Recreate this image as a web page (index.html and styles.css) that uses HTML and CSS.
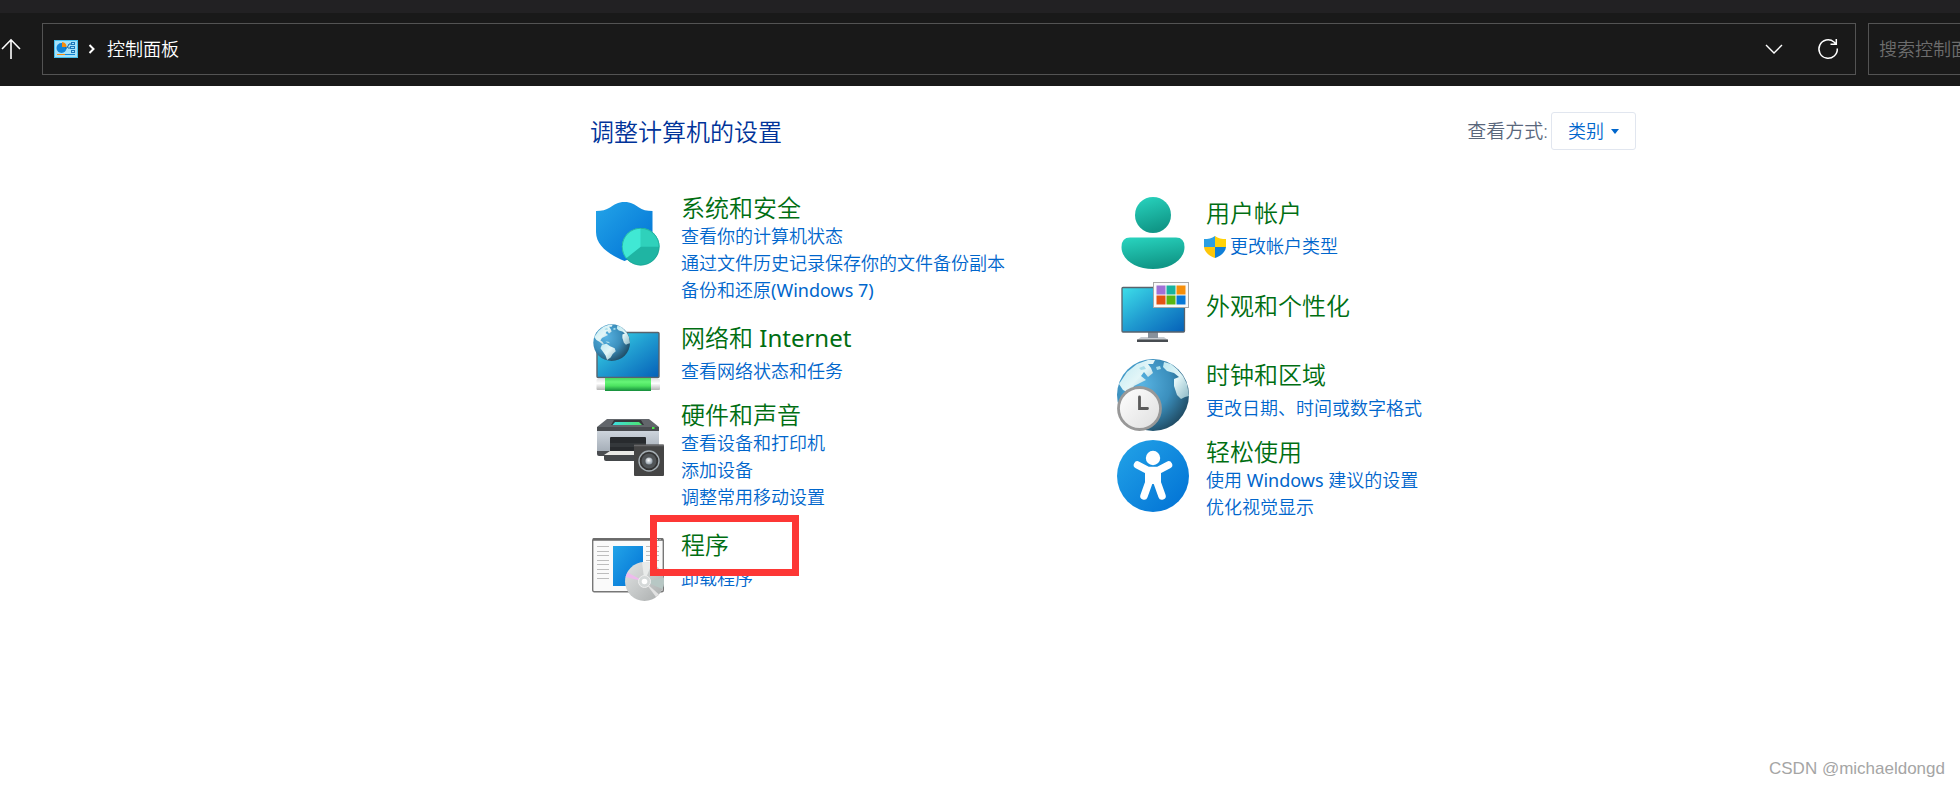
FILE: index.html
```html
<!DOCTYPE html>
<html lang="zh-CN">
<head>
  <meta charset="UTF-8">
  <title>控制面板</title>
  <meta name="viewport" content="width=device-width, initial-scale=1.0">
  <link rel="stylesheet" href="styles.css">
</head>
<body>

  <header class="toolbar">
    <button class="up" type="button" aria-label="up">
      <svg width="22" height="22" viewBox="0 0 22 22" fill="none" stroke="#fff" stroke-width="1.6"><path d="M11 21V2M2 11l9-9.2L20 11"/></svg>
    </button>
    <nav class="address">
      <svg width="24" height="18" viewBox="0 0 24 18">
        <rect width="24" height="18" fill="#46c0ee"/>
        <rect x="1" y="1" width="22" height="16" fill="#a5e2fa"/>
        <circle cx="7.500" cy="8" r="5" fill="#1184d8"/>
        <path d="M8 7V2a5 5 0 0 1 4.500 5z" fill="#f78d0c"/>
        <path d="M11 8h2l2-4h3M14 8h2" fill="none" stroke="#155f9c"/>
        <g fill="none" stroke="#1b78bd"><rect x="17.500" y="2.500" width="3" height="2"/><rect x="16.500" y="6.500" width="4" height="2"/><rect x="17.500" y="10.500" width="3" height="2"/></g>
        <path d="M3 14.500h8" stroke="#f78d0c"/><path d="M11 14.500h10" stroke="#1184d8"/>
      </svg>
      <svg width="8" height="10" viewBox="0 0 8 10" fill="none" stroke="#fff" stroke-width="2"><path d="M1.500 1l4 4-4 4"/></svg>
      <a href="#">控制面板</a>
      <button class="history" type="button" aria-label="history">
        <svg width="18" height="12" viewBox="0 0 18 12" fill="none" stroke="#fff" stroke-width="1.400"><path d="M1 2l8 8 8-8"/></svg>
      </button>
      <button class="refresh" type="button" aria-label="refresh">
        <svg width="22" height="22" viewBox="0 0 22 22" fill="none" stroke="#fff" stroke-width="1.500"><path d="M20.300 10.500A9.200 9.200 0 1 1 17 4l2 2M19.300 1v5.300H13.500"/></svg>
      </button>
    </nav>
    <input class="search" type="text" placeholder="搜索控制面板" aria-label="search">
  </header>

  <main>
    <div class="head">
      <h1>调整计算机的设置</h1>
      <div class="view">
        <label for="viewBy">查看方式:</label>
        <div class="picker">
          <select id="viewBy">
            <option>类别</option>
          </select>
          <svg width="8" height="5" viewBox="0 0 8 5"><path d="M0 0h8L4 5z" fill="#0066cc"/></svg>
        </div>
      </div>
    </div>

    <div class="columns">
      <div class="column">

        <section class="item triple">
          <svg class="icon" viewBox="0 0 72 72">
            <defs>
              <linearGradient id="blue" x1="0" y1="0" x2="1" y2="1"><stop offset="0" stop-color="#23a4e8"/><stop offset="1" stop-color="#0070d4"/></linearGradient>
            </defs>
            <path d="M32.500 4C39 4 43 6.500 47 9.500C50 12 55 13 60.500 13V34C60.500 48 46 58 32.500 63C18 57 4 48 4 34V13C10 13 14 12 18 9.500C22 6.500 26 4 32.500 4z" fill="url(#blue)"/>
            <circle cx="48.700" cy="48.700" r="18.800" fill="#1fb5a3"/>
            <path d="M48.700 48.700V29.900A18.800 18.800 0 0 1 67.500 48.700z" fill="#2fd1bb"/>
            <path d="M48.700 48.700V29.900A18.800 18.800 0 0 0 34 60.400z" fill="#40e8d4"/>
            <circle cx="48.700" cy="48.700" r="18.400" fill="none" stroke="#199e91" stroke-opacity=".6"/>
          </svg>
          <div class="text">
            <h2><a href="#">系统和安全</a></h2>
            <a href="#">查看你的计算机状态</a>
            <a href="#">通过文件历史记录保存你的文件备份副本</a>
            <a href="#">备份和还原<span class="latin">(Windows 7)</span></a>
          </div>
        </section>

        <section class="item">
          <svg class="icon" viewBox="0 0 72 72">
            <defs>
              <linearGradient id="screen" x1="0" y1="0" x2="1" y2="1"><stop offset="0" stop-color="#3ddfea"/><stop offset=".5" stop-color="#209bd0"/><stop offset="1" stop-color="#0560b8"/></linearGradient>
              <linearGradient id="cable" x1="0" y1="0" x2="0" y2="1"><stop offset="0" stop-color="#47d660"/><stop offset=".3" stop-color="#66f577"/><stop offset=".6" stop-color="#4ce360"/><stop offset="1" stop-color="#148c3c"/></linearGradient>
              <linearGradient id="plug" x1="0" y1="0" x2="0" y2="1"><stop offset="0" stop-color="#e4e4e4"/><stop offset=".4" stop-color="#fff"/><stop offset="1" stop-color="#b5b5b5"/></linearGradient>
              <radialGradient id="sea" cx=".35" cy=".35" r=".72"><stop offset="0" stop-color="#58b3e2"/><stop offset=".55" stop-color="#3b8fbd"/><stop offset="1" stop-color="#1f4a62"/></radialGradient>
              <linearGradient id="land" x1="0" y1="0" x2="1" y2="1"><stop offset="0" stop-color="#bfe9f1"/><stop offset=".5" stop-color="#e3f6f8"/><stop offset="1" stop-color="#8bb7c4"/></linearGradient>
              <g id="globe">
                <circle cx="36" cy="36" r="36" fill="url(#sea)"/>
                <path d="M10 13L20 5L31 1L38 1L36 5L31 5L34 9L36 14L31 18L27 13L24 17L29 21L23 24L17 27L14 32L18 34L21 39L18 39L12 34L6 31L2 25z" fill="url(#land)"/>
                <path d="M17 40L26 38L33 43L42 47L44 53L38 58L34 65L27 70L24 61L19 54L14 47z" fill="url(#land)"/>
                <path d="M47 3L54 5L60 10L66 17L70 25L72 37L68 38L64 40L60 36L57 27L57 20L62 18L57 14L50 12L46 8z" fill="url(#land)"/>
                <path d="M22 9l5-2 2 3-5 1zM39 8l4-1 1 3-4 1zM24 33l6 1 3 3-6-1z" fill="#a9ddea"/>
              </g>
            </defs>
            <rect x="5" y="9.500" width="62" height="45" rx="1" fill="url(#screen)" stroke="#59636c" stroke-width="1.400"/>
            <rect x="4.500" y="56" width="63.500" height="11" rx="1" fill="url(#plug)"/>
            <rect x="13" y="55" width="46" height="13" fill="url(#cable)"/>
            <use href="#globe" transform="translate(1.300 1.300) scale(.51)"/>
          </svg>
          <div class="text">
            <h2><a href="#">网络和 <span class="latin">Internet</span></a></h2>
            <a href="#">查看网络状态和任务</a>
          </div>
        </section>

        <section class="item triple">
          <svg class="icon" viewBox="0 0 72 72">
            <defs>
              <linearGradient id="shell" x1="0" y1="0" x2="0" y2="1"><stop offset="0" stop-color="#cdd4dc"/><stop offset="1" stop-color="#a2abb5"/></linearGradient>
              <linearGradient id="glass" x1="0" y1="0" x2="1" y2="0"><stop offset="0" stop-color="#3ddfe0"/><stop offset="1" stop-color="#4de36f"/></linearGradient>
              <radialGradient id="cone" cx=".45" cy=".4" r=".6"><stop offset="0" stop-color="#fff"/><stop offset="1" stop-color="#8a97a3"/></radialGradient>
            </defs>
            <path d="M15 14H57L67 22V26H5V22z" fill="#62666b"/>
            <path d="M5 22H67V26H5z" fill="#494c50"/>
            <path d="M22 15H49L52 20H19z" fill="#35383b"/>
            <path d="M23 17H47L50 20H20.500z" fill="url(#glass)"/>
            <rect x="60" y="22" width="2.500" height="2" fill="#4be84b"/>
            <rect x="5" y="26" width="62" height="22" fill="url(#shell)"/>
            <path d="M5 46H18V51H7Q5 51 5 49z" fill="#4a4d51"/>
            <rect x="18" y="32" width="36" height="15" rx="1" fill="#282b2e"/>
            <rect x="18" y="38" width="36" height="4" fill="#34383b"/>
            <path d="M18 46H50V50H12z" fill="#e9e9e6"/>
            <path d="M12 50H46V56H14Q12 56 12 54z" fill="#44474a"/>
            <rect x="42" y="39.500" width="30" height="31.500" rx="1" fill="#454545"/>
            <path d="M42 40.500H72" stroke="#68686a" stroke-width="1.500"/>
            <circle cx="57" cy="56" r="10" fill="#343434" stroke="#a4adb3" stroke-width="1.400"/>
            <circle cx="57" cy="56" r="7.500" fill="#515558"/>
            <circle cx="57" cy="56" r="3.600" fill="url(#cone)"/>
          </svg>
          <div class="text">
            <h2><a href="#">硬件和声音</a></h2>
            <a href="#">查看设备和打印机</a>
            <a href="#">添加设备</a>
            <a href="#">调整常用移动设置</a>
          </div>
        </section>

        <section class="item">
          <svg class="icon" viewBox="0 0 72 72">
            <defs>
              <linearGradient id="disc" x1="0" y1="0" x2="1" y2="1"><stop offset="0" stop-color="#e2e4e4"/><stop offset=".5" stop-color="#c6c9c9"/><stop offset="1" stop-color="#a8abab"/></linearGradient>
            </defs>
            <rect x=".7" y="8.700" width="70.600" height="53" rx="1.500" fill="#fafafa" stroke="#777" stroke-width="1.400"/>
            <path d="M1 9.500H71" stroke="#6a6a6a" stroke-width="2.500"/>
            <path d="M65 9.500h1M67.500 9.500h1" stroke="#ddd"/>
            <path d="M5 16.500H17M5 21.500H17M5 25.500H17M5 30.500H17M5 34.500H17M5 39.500H17M5 43.500H17M5 48.500H17M54 16.500H67M54 21.500H67M54 25.500H67M54 30.500H67" stroke="#bdbdbd"/>
            <rect x="21" y="16" width="30" height="40" fill="url(#blue)"/>
            <circle cx="52.500" cy="51.500" r="19.500" fill="url(#disc)"/>
            <path d="M52.500 51.500L50 32.200A19.500 19.500 0 0 1 60 33.500z" fill="#e9ebea"/>
            <path d="M52.500 51.500L33.500 47L35.500 42.500z" fill="#eebbed"/>
            <path d="M52.500 51.500L67 64.500L64 67z" fill="#e2e2e2"/>
            <path d="M52.500 51.500L71.800 48A19.500 19.500 0 0 1 70.500 59z" fill="#b7c7c4"/>
            <circle cx="52.500" cy="51.500" r="6" fill="#d5d9d9" stroke="#eee"/>
            <circle cx="52.500" cy="51.500" r="2.800" fill="#fff"/>
          </svg>
          <div class="text">
            <h2><a href="#">程序</a></h2>
            <a href="#">卸载程序</a>
            <span class="mark"></span>
          </div>
        </section>

      </div>
      <div class="column right">

        <section class="item">
          <svg class="icon" viewBox="0 0 72 72">
            <defs>
              <linearGradient id="teal" x1="0" y1="0" x2=".3" y2="1"><stop offset="0" stop-color="#29d5c0"/><stop offset="1" stop-color="#109787"/></linearGradient>
            </defs>
            <circle cx="36" cy="18" r="18" fill="url(#teal)"/>
            <path d="M13 40.500H59Q67.500 40.500 67.500 50C67.500 63 53 72 36 72S4.500 63 4.500 50Q4.500 40.500 13 40.500z" fill="url(#teal)"/>
          </svg>
          <div class="text">
            <h2><a href="#">用户帐户</a></h2>
            <a class="admin" href="#">
              <svg width="22" height="22" viewBox="0 0 22 22">
                <path d="M11 0C8 2.500 4 3 0 3V11H11z" fill="#2b9fe4"/>
                <path d="M11 0C14 2.500 18 3 22 3V11H11z" fill="#ffd20a"/>
                <path d="M0 11C0.500 16 5 20 11 22V11z" fill="#fdc60a"/>
                <path d="M22 11C21.500 16 17 20 11 22V11z" fill="#0f7fd8"/>
              </svg>更改帐户类型</a>
          </div>
        </section>

        <section class="item title-only">
          <svg class="icon" viewBox="0 0 72 72">
            <path d="M24 59H47L51 62H20z" fill="#c7ccd1"/>
            <rect x="31" y="54" width="10" height="6" fill="#87919b"/>
            <rect x="20" y="61.500" width="31" height="2.500" fill="#474c51"/>
            <rect x="5" y="9.500" width="62.500" height="44.500" rx="1" fill="url(#screen)" stroke="#59636c" stroke-width="1.300"/>
            <rect x="36.500" y="4.500" width="35" height="25" fill="#fafafa" stroke="#a8a8a8"/>
            <rect x="39.500" y="7.500" width="9" height="9" fill="#a071d6"/>
            <rect x="49.500" y="7.500" width="9" height="9" fill="#18b39f"/>
            <rect x="59.500" y="7.500" width="9" height="9" fill="#f68f0b"/>
            <rect x="39.500" y="17.500" width="9" height="9" fill="#e45313"/>
            <rect x="49.500" y="17.500" width="9" height="9" fill="#59b613"/>
            <rect x="59.500" y="17.500" width="9" height="9" fill="#0878d7"/>
          </svg>
          <div class="text">
            <h2><a href="#">外观和个性化</a></h2>
          </div>
        </section>

        <section class="item">
          <svg class="icon" viewBox="0 0 72 72">
            <defs>
              <linearGradient id="dial" x1="0" y1="0" x2="1" y2="1"><stop offset="0" stop-color="#fff"/><stop offset="1" stop-color="#dedede"/></linearGradient>
            </defs>
            <use href="#globe"/>
            <circle cx="22.500" cy="49.500" r="21" fill="url(#dial)" stroke="#989898" stroke-width="2.800"/>
            <path d="M22.500 38V49.500H30.500" fill="none" stroke="#5a5a5a" stroke-width="2.800" stroke-linecap="round"/>
          </svg>
          <div class="text">
            <h2><a href="#">时钟和区域</a></h2>
            <a href="#">更改日期、时间或数字格式</a>
          </div>
        </section>

        <section class="item double">
          <svg class="icon" viewBox="0 0 72 72">
            <circle cx="36" cy="36" r="36" fill="url(#blue)"/>
            <circle cx="36" cy="18" r="7.200" fill="#fff"/>
            <g fill="none" stroke="#fff" stroke-width="7.500" stroke-linecap="round" stroke-linejoin="round"><path d="M20.500 25L31 30.500H41L51.500 25"/><path d="M32 42L27 56M40 42L45 56"/></g>
            <path d="M28 29H44V44H28z" fill="#fff"/>
          </svg>
          <div class="text">
            <h2><a href="#">轻松使用</a></h2>
            <a href="#">使用 <span class="latin">Windows</span> 建议的设置</a>
            <a href="#">优化视觉显示</a>
          </div>
        </section>

      </div>
    </div>
  </main>

  <footer>CSDN @michaeldongd</footer>

</body>
</html>
```
FILE: styles.css
```css
* {
  box-sizing: border-box;
  margin: 0;
  padding: 0;
}

body {
  background: #fff;
  color: #0066cc;
  font-family: "Noto Sans", "Noto Sans CJK SC", sans-serif;
  font-size: 18px;
  font-weight: 350;
  line-height: 27px;
  min-height: 100vh;
  display: flex;
  flex-direction: column;
}

a {
  color: #0066cc;
  text-decoration: none;
}

button {
  background: none;
  border: none;
  cursor: pointer;
}

svg {
  display: block;
  flex: none;
}

.latin {
  font-weight: 400;
}

.toolbar {
  display: flex;
  background: #191919;
  border-top: 13px solid #222123;
  padding: 10px 0 11px;
}

.up {
  width: 42px;
}

.address {
  flex: 1;
  height: 52px;
  display: flex;
  align-items: center;
  border: 1px solid #535353;
  padding-left: 11px;
  margin-right: 12px;
}

.address a {
  color: #fff;
  margin-left: 11px;
}

.address svg + svg {
  margin-left: 10px;
}

.history {
  margin-left: auto;
  padding: 8px;
}

.refresh {
  padding: 8px;
  margin: 0 8px 0 18px;
}

.search {
  width: 92px;
  background: #191919;
  border: 1px solid #535353;
  border-right: none;
  color: #fff;
  font: inherit;
  padding-left: 10px;
}

.search::placeholder {
  color: #6d6d6d;
}

main {
  flex: 1;
  padding: 26px 324px 0 590px;
}

.head {
  display: flex;
  align-items: center;
  justify-content: space-between;
  height: 38px;
  margin-bottom: 43px;
}

h1 {
  color: #003399;
  font-size: 24px;
  font-weight: inherit;
}

.view {
  display: flex;
  align-items: center;
  gap: 3px;
}

.view label {
  color: #5a677c;
  font-size: 19px;
}

.picker {
  position: relative;
}

.picker select {
  appearance: none;
  width: 85px;
  height: 38px;
  background: #fff;
  border: 1px solid #e1e6ef;
  border-radius: 3px;
  color: #0066cc;
  font: inherit;
  padding-left: 16px;
}

.picker svg {
  position: absolute;
  right: 17px;
  top: 17px;
  pointer-events: none;
}

.columns {
  display: grid;
  grid-template-columns: 1fr 1fr;
  gap: 4px;
}

.column {
  display: flex;
  flex-direction: column;
  gap: 5px;
}

.right {
  gap: 9px;
  padding-top: 4px;
}

.item {
  display: flex;
  gap: 17px;
  min-height: 72px;
  padding-left: 2px;
}

.icon {
  width: 72px;
  height: 72px;
}

.text {
  position: relative;
}

.text > a {
  display: block;
}

h2 {
  font-size: 24px;
  font-weight: inherit;
  line-height: 30px;
  margin-bottom: 5px;
}

h2 a {
  color: #006e12;
}

.right .text {
  padding-top: 1px;
}

/* items with more than one link sit tighter */
.triple {
  padding-bottom: 14px;
}

.triple .icon {
  margin-top: 5px;
}

.triple h2,
.double h2 {
  margin-bottom: 0;
}

.double .text {
  margin-top: -4px;
}

.title-only .text {
  padding-top: 13px;
}

.text .admin {
  display: flex;
  align-items: center;
  gap: 4px;
  margin-left: -2px;
}

.mark {
  position: absolute;
  left: -31px;
  top: -15px;
  width: 149px;
  height: 61px;
  border: 7px solid #fd3735;
  pointer-events: none;
}

footer {
  align-self: flex-end;
  padding: 0 15px 5px;
  color: #a5a5a5;
  font-family: "Liberation Sans", sans-serif;
  font-size: 17px;
}
```
